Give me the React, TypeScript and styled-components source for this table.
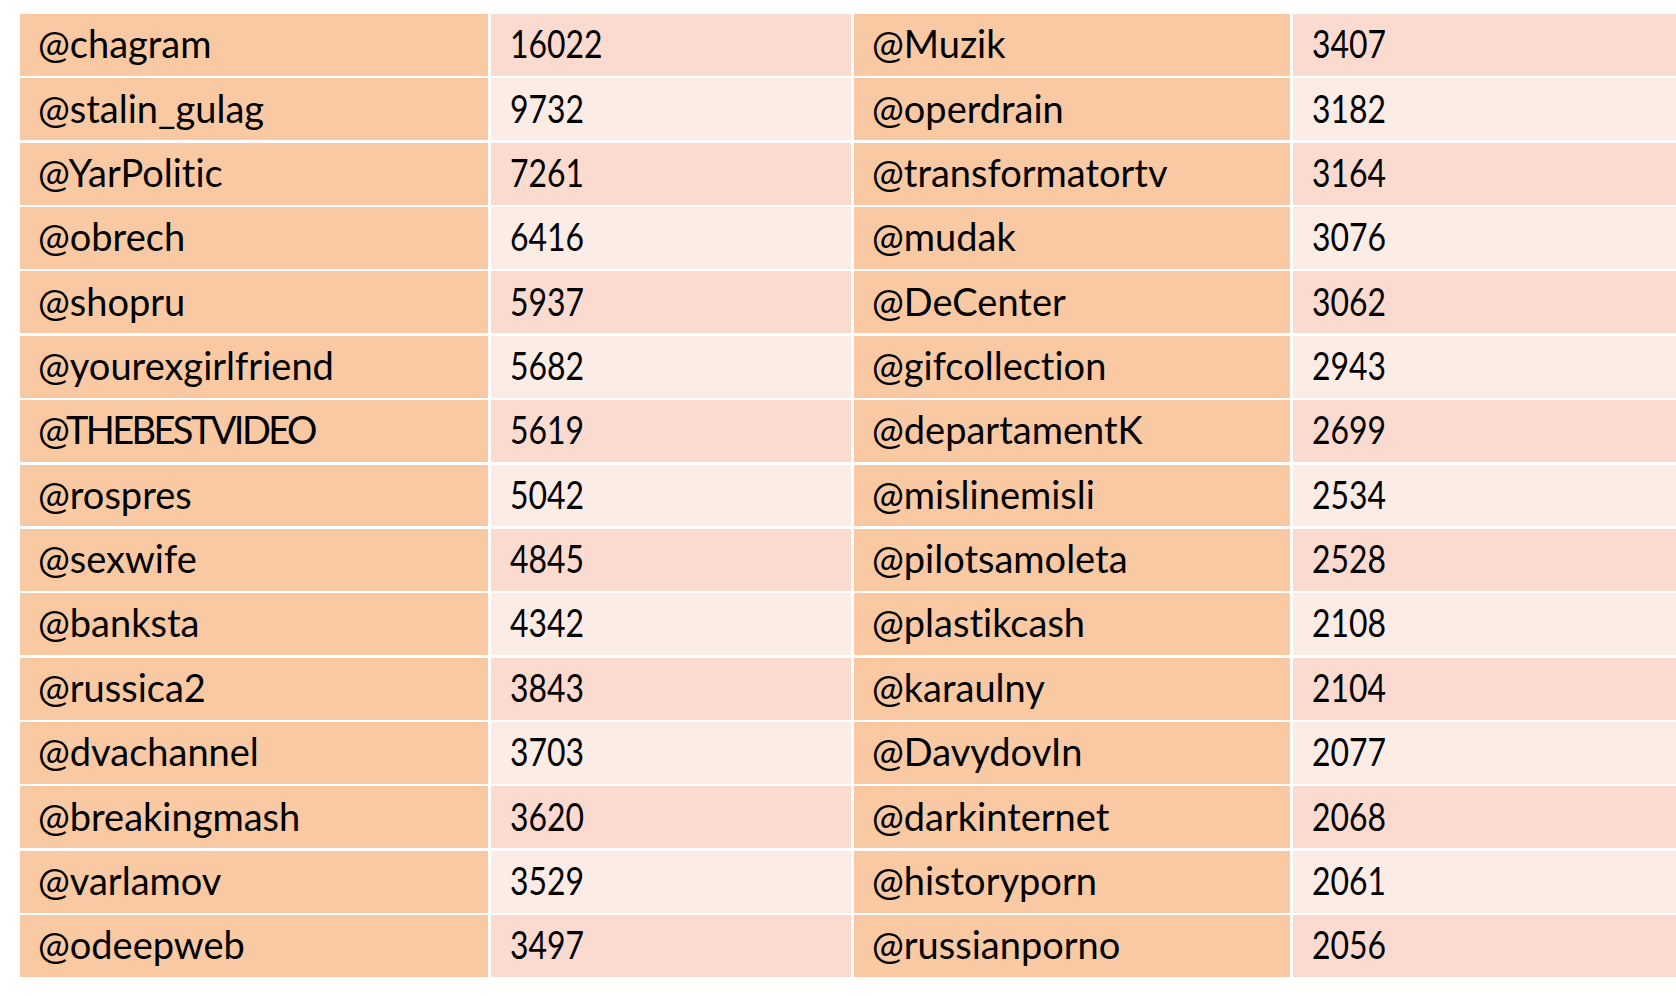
import React from "react";
import styled, { createGlobalStyle } from "styled-components";

const GlobalStyle = createGlobalStyle`
  html, body {
    margin: 0;
    padding: 0;
    background: #ffffff;
    overflow: hidden;
  }
  body {
    font-family: Lato, "Open Sans", "DejaVu Sans", sans-serif;
    color: #000;
  }
`;

const Page = styled.div`
  width: 1676px;
  height: 996px;
  padding: 14px 0 0 20px;
  box-sizing: border-box;
  overflow: hidden;
`;

const Table = styled.div`
  display: grid;
  grid-template-columns: 468px 360px 436px 420px;
  grid-template-rows: repeat(15, 1fr);
  column-gap: 3px;
  row-gap: 2.4px;
  height: 963px;
  width: 1700px;
`;

const Cell = styled.div<{ $kind: "name" | "count"; $band: boolean }>`
  display: flex;
  align-items: center;
  box-sizing: border-box;
  padding: 0 0 2px ${(p) => (p.$kind === "name" ? "18px" : "19px")};
  background: ${(p) =>
    p.$kind === "name" ? "#F8C9A3" : p.$band ? "#FBDBCF" : "#FCECE6"};
  font-size: 38px;
  line-height: 1.2;
  white-space: nowrap;
  font-variant-ligatures: none;
`;

const Name = styled.span<{ $caps?: boolean }>`
  letter-spacing: ${(p) => (p.$caps ? "-2.6px" : "0")};
`;

const Count = styled.span`
  display: inline-block;
  transform: scaleX(0.84);
  transform-origin: left center;
`;

const left: [string, string][] = [
  ["@chagram", "16022"],
  ["@stalin_gulag", "9732"],
  ["@YarPolitic", "7261"],
  ["@obrech", "6416"],
  ["@shopru", "5937"],
  ["@yourexgirlfriend", "5682"],
  ["@THEBESTVIDEO", "5619"],
  ["@rospres", "5042"],
  ["@sexwife", "4845"],
  ["@banksta", "4342"],
  ["@russica2", "3843"],
  ["@dvachannel", "3703"],
  ["@breakingmash", "3620"],
  ["@varlamov", "3529"],
  ["@odeepweb", "3497"],
];

const right: [string, string][] = [
  ["@Muzik", "3407"],
  ["@operdrain", "3182"],
  ["@transformatortv", "3164"],
  ["@mudak", "3076"],
  ["@DeCenter", "3062"],
  ["@gifcollection", "2943"],
  ["@departamentK", "2699"],
  ["@mislinemisli", "2534"],
  ["@pilotsamoleta", "2528"],
  ["@plastikcash", "2108"],
  ["@karaulny", "2104"],
  ["@DavydovIn", "2077"],
  ["@darkinternet", "2068"],
  ["@historyporn", "2061"],
  ["@russianporno", "2056"],
];

const isCaps = (s: string) => s.slice(1) === s.slice(1).toUpperCase();

export default function App() {
  return (
    <>
      <GlobalStyle />
      <Page>
        <Table>
          {left.map(([name, count], i) => {
            const band = i % 2 === 0;
            const [rName, rCount] = right[i];
            return (
              <React.Fragment key={name}>
                <Cell $kind="name" $band={band}>
                  <Name $caps={isCaps(name)}>{name}</Name>
                </Cell>
                <Cell $kind="count" $band={band}>
                  <Count>{count}</Count>
                </Cell>
                <Cell $kind="name" $band={band}>
                  <Name $caps={isCaps(rName)}>{rName}</Name>
                </Cell>
                <Cell $kind="count" $band={band}>
                  <Count>{rCount}</Count>
                </Cell>
              </React.Fragment>
            );
          })}
        </Table>
      </Page>
    </>
  );
}
